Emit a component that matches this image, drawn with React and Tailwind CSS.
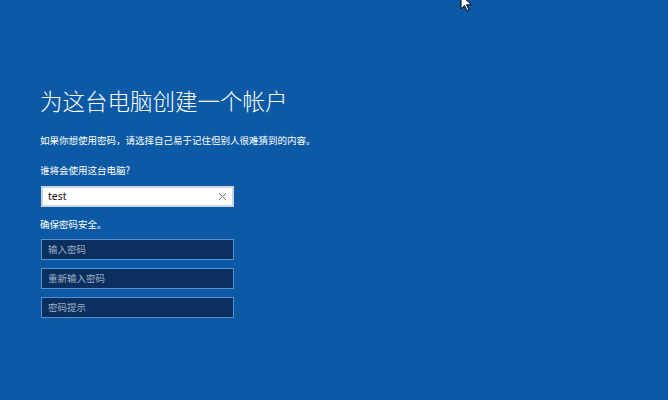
import React from "react";

const font = { fontFamily: '"Noto Sans CJK SC", "Noto Sans", sans-serif' };

export default function App() {
  return (
    <div
      className="relative w-[668px] h-[400px] overflow-hidden bg-[#0c5aa6] text-white"
      style={font}
    >
      <div className="flex flex-col pl-[40px] pt-[88px]">
        <h1 className="text-[22.5px] leading-[24px] font-light tracking-[0px]">
          为这台电脑创建一个帐户
        </h1>
        <p className="mt-[22px] text-[9.5px] leading-[12px]">
          如果你想使用密码，请选择自己易于记住但别人很难猜到的内容。
        </p>
        <p className="mt-[18px] text-[9.5px] leading-[12px]">谁将会使用这台电脑?</p>
        <div className="mt-[10px] ml-[1px] w-[193px] h-[21px] bg-white border-2 border-[#c9d4e2] flex items-center justify-between pl-[5px] pr-[5px]">
          <span className="text-[10.5px] leading-none text-[#111]" style={{ fontFamily: '"Noto Sans", sans-serif' }}>test</span>
          <svg width="9" height="9" viewBox="0 0 9 9" className="text-[#777]">
            <path d="M1 1L8 8M8 1L1 8" stroke="currentColor" strokeWidth="1" />
          </svg>
        </div>
        <p className="mt-[11px] text-[9.5px] leading-[12px]">确保密码安全。</p>
        <div className="mt-[9px] flex flex-col gap-[8px]">
          {["输入密码", "重新输入密码", "密码提示"].map((t) => (
            <div
              key={t}
              className="ml-[1px] w-[193px] h-[21px] bg-[#0b2f5f] border border-[#5590cf] flex items-center pl-[6px]"
            >
              <span className="text-[9.5px] leading-none text-[#9fb0c6]">{t}</span>
            </div>
          ))}
        </div>
      </div>
      <svg
        className="absolute left-[460px] top-[-6px]"
        width="14"
        height="20"
        viewBox="0 0 14 20"
      >
        <path
          d="M1 1 L1 15 L4.5 11.5 L7 17 L9 16 L6.5 10.8 L11.5 10.8 Z"
          fill="#ffffff"
          stroke="#000000"
          strokeWidth="1"
          strokeLinejoin="round"
        />
      </svg>
    </div>
  );
}
